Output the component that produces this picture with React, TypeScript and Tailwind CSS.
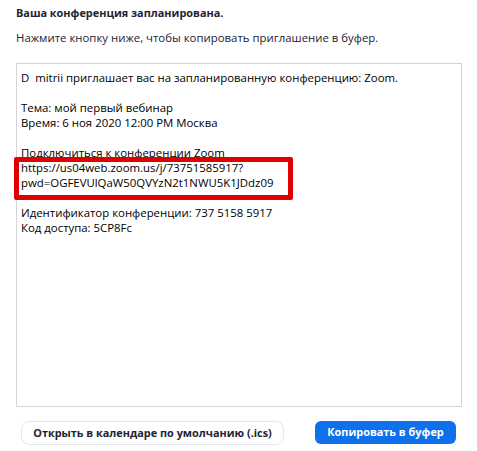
export default function App() {
  const font = { fontFamily: '"Segoe UI", "Open Sans", "Noto Sans", sans-serif' };
  return (
    <div className="w-[477px] h-[451px] bg-white text-[#232333] flex flex-col" style={font}>
      <div className="pl-4 pt-[5px] text-[10.9px] font-bold leading-[16px] text-[#232333]">
        Ваша конференция запланирована.
      </div>
      <div className="pl-4 pt-[9px] text-[11.4px] leading-[16px] text-[#232333]">
        Нажмите кнопку ниже, чтобы копировать приглашение в буфер.
      </div>
      <div className="ml-4 mt-[17px] w-[446px] h-[344px] border border-[#d4d4d4] pl-[4px] pt-[6px] text-[11.4px] leading-[15px] text-black">
        <div>D&nbsp; mitrii приглашает вас на запланированную конференцию: Zoom.</div>
        <div className="h-[15px]" />
        <div>Тема: мой первый вебинар</div>
        <div>Время: 6 ноя 2020 12:00 PM Москва</div>
        <div className="h-[15px]" />
        <div>Подключиться к конференции Zoom</div>
        <div className="relative">
          <div>https://us04web.zoom.us/j/73751585917?</div>
          <div>pwd=OGFEVUlQaW50QVYzN2t1NWU5K1JDdz09</div>
          <div className="absolute left-[-7px] top-[-3px] w-[279px] h-[43px] border-[5px] border-[#e00000] rounded-[2px]" />
        </div>
        <div className="h-[15px]" />
        <div>Идентификатор конференции: 737 5158 5917</div>
        <div>Код доступа: 5CP8Fc</div>
      </div>
      <div className="flex justify-between pl-[21px] pr-[21px] mt-[14px]">
        <button className="h-[24px] w-[263px] whitespace-nowrap rounded-[8px] border border-[#e4e4ed] bg-white text-[10.9px] font-bold text-[#232333]">
          Открыть в календаре по умолчанию (.ics)
        </button>
        <button className="h-[23px] w-[141px] whitespace-nowrap rounded-[6px] bg-[#0e71eb] text-[10.9px] font-bold text-white">
          Копировать в буфер
        </button>
      </div>
    </div>
  );
}
